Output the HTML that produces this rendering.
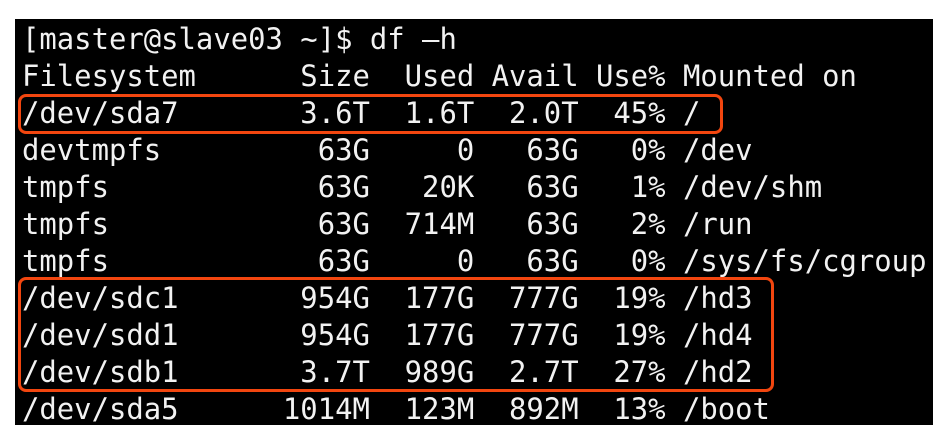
<!DOCTYPE html>
<html><head><meta charset="utf-8"><style>
html,body{margin:0;padding:0;background:#fff;width:947px;height:443px;overflow:hidden;position:relative}
#term{position:absolute;left:15px;top:19px;width:918px;height:406px;background:#000}
pre{position:absolute;left:22px;top:21px;margin:0;font-family:"DejaVu Sans Mono","Liberation Mono",monospace;font-size:28.9px;line-height:37px;color:#f2f2f2;white-space:pre}
.box{position:absolute;border:3.5px solid #f2460f;border-radius:8px;box-sizing:border-box}
</style></head><body>
<div id="term"></div>
<pre>[master@slave03 ~]$ df –h
Filesystem      Size  Used Avail Use% Mounted on
/dev/sda7       3.6T  1.6T  2.0T  45% /
devtmpfs         63G     0   63G   0% /dev
tmpfs            63G   20K   63G   1% /dev/shm
tmpfs            63G  714M   63G   2% /run
tmpfs            63G     0   63G   0% /sys/fs/cgroup
/dev/sdc1       954G  177G  777G  19% /hd3
/dev/sdd1       954G  177G  777G  19% /hd4
/dev/sdb1       3.7T  989G  2.7T  27% /hd2
/dev/sda5      1014M  123M  892M  13% /boot</pre>
<div class="box" style="left:18px;top:94px;width:705px;height:40px"></div>
<div class="box" style="left:18px;top:277px;width:756px;height:115px"></div>
</body></html>
